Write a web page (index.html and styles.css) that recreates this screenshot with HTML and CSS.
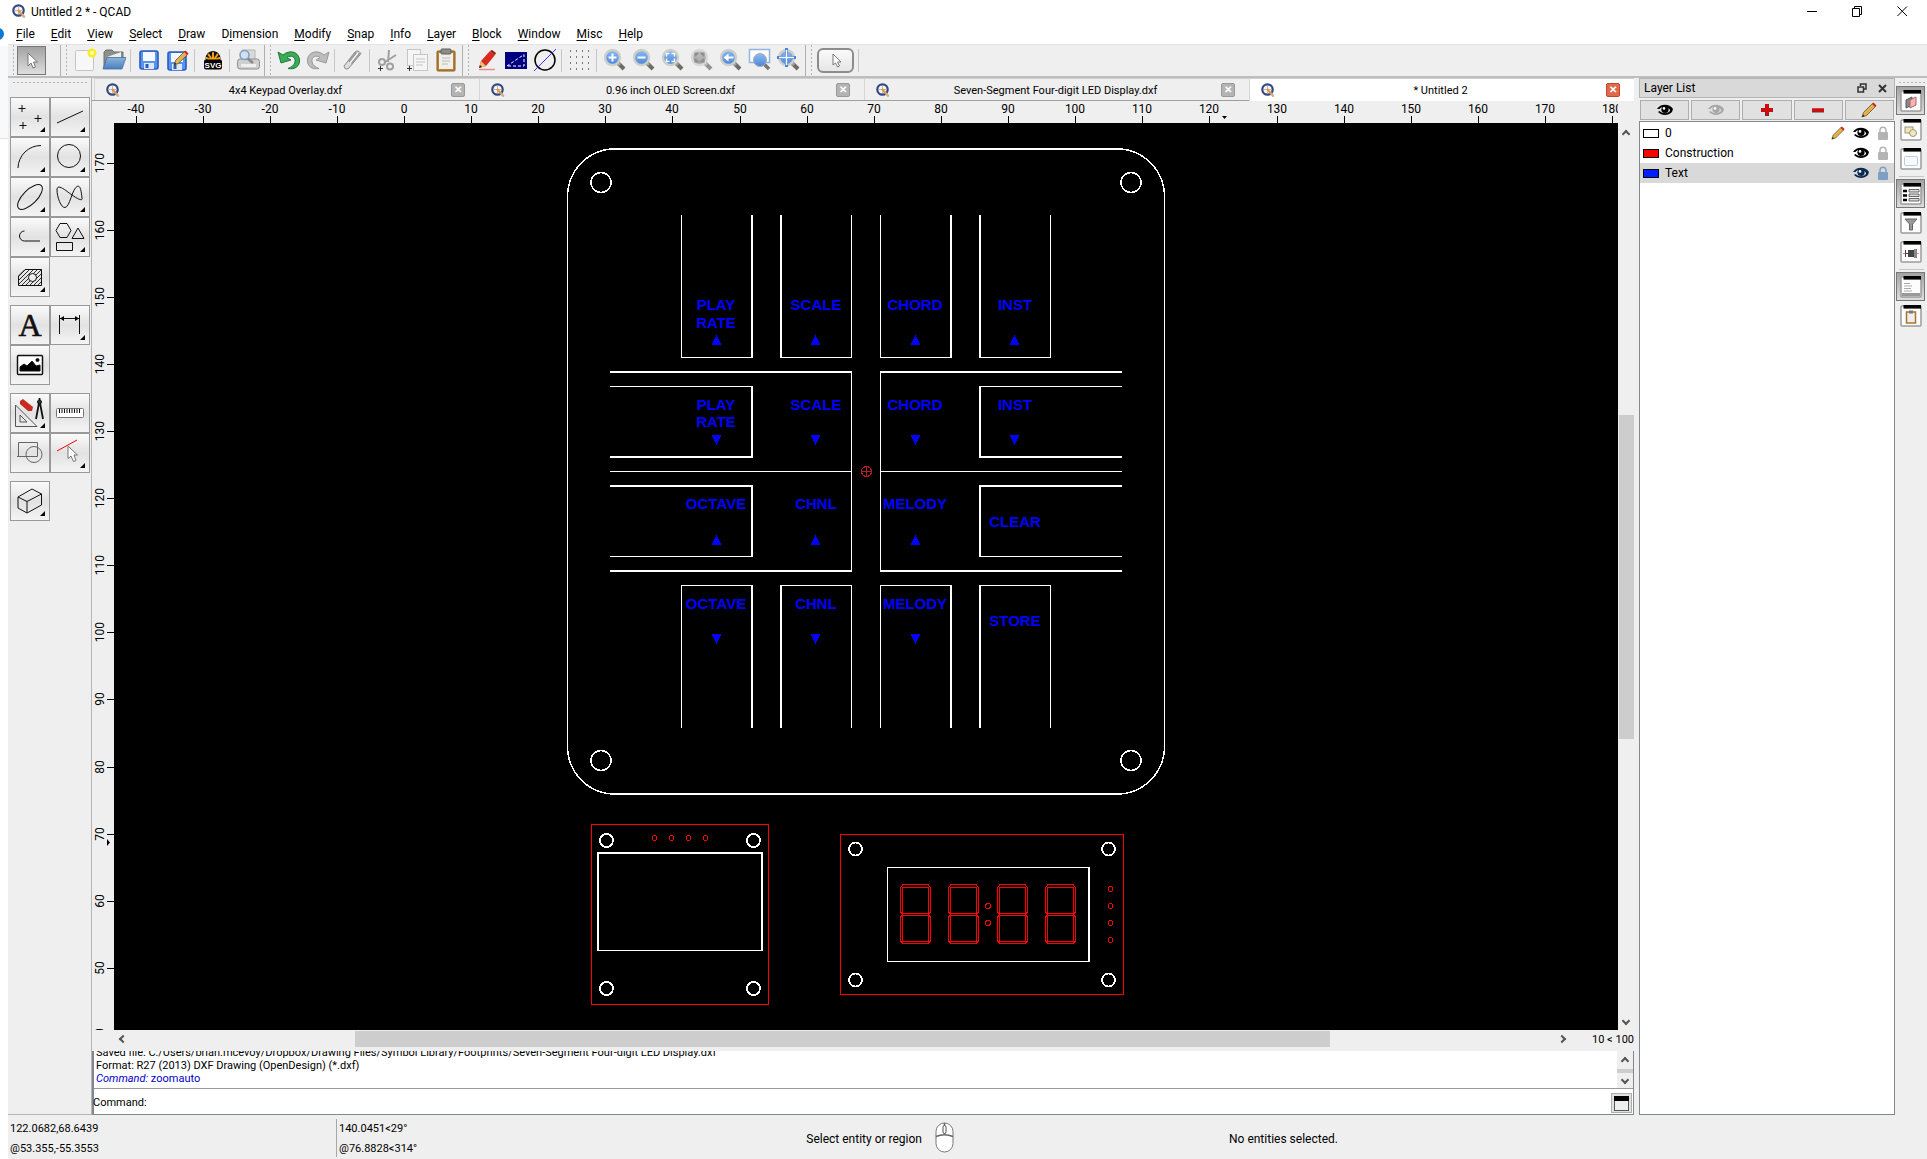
FILE: index.html
```html
<!DOCTYPE html>
<html lang="en">
<head>
    <meta charset="UTF-8">
    <meta name="viewport" content="width=device-width, initial-scale=1.0">
    <title>Untitled 2 * - QCAD</title>
    <link rel="stylesheet" href="styles.css">
</head>
<body>
<!-- shared icons -->
<svg class="defs" aria-hidden="true">
    <defs>
        <linearGradient id="lensBlue" x1="0" y1="0" x2="0" y2="1"><stop offset="0" stop-color="#8dbcf0"/><stop offset="1" stop-color="#4a86d8"/></linearGradient>
        <linearGradient id="folder" x1="0" y1="0" x2="0" y2="1"><stop offset="0" stop-color="#8cb4dc"/><stop offset="1" stop-color="#4a80bd"/></linearGradient>
        <pattern id="hatch" width="4" height="4" patternUnits="userSpaceOnUse"><path d="M-1 1L1-1M0 4L4 0M3 5L5 3" stroke="#000" stroke-width=".8"/></pattern>
        <symbol id="i-app" viewBox="0 0 14 14">
            <circle cx="6.5" cy="6.5" r="5.2" fill="#f4f4f8" stroke="#34477f" stroke-width="2.2"/>
            <path d="M6.5 2.5V10M3 6.5H10" stroke="#a9a9b4" stroke-width=".8"/>
            <path d="M6 6L12.5 13.2" stroke="#e39a3a" stroke-width="2.2"/>
            <path d="M10 10.5L13 13.5" stroke="#b9b9c4" stroke-width="1.4"/>
        </symbol>
        <symbol id="i-lens" viewBox="0 0 24 24">
            <path d="M14 14L21 21" stroke="#6d6d66" stroke-width="4"/>
            <path d="M13 13L17 17" stroke="#a5a59d" stroke-width="3"/>
            <circle cx="9.500" cy="9.500" r="7.500" fill="url(#lensBlue)" stroke="#cfcfca" stroke-width="2.4"/>
        </symbol>
        <symbol id="i-eye" viewBox="0 0 16 12">
            <path d="M0 5C3 0 12-1 16 5L15 8C11 12 5 12 1 8L2.500 7C6 10 10 10 13 7C14 4 5 1 2.500 5Z" fill="currentColor"/>
            <circle cx="8" cy="5.500" r="3.600" fill="currentColor"/>
            <circle cx="7" cy="4.400" r="1.300" fill="#fff"/>
        </symbol>
        <symbol id="i-lock" viewBox="0 0 12 14">
            <path d="M3 7V4.500C3 0 9 0 9 4.500V7" fill="none" stroke="currentColor" stroke-width="1.500"/>
            <rect x="1" y="6" width="10" height="8" rx="1" fill="currentColor"/>
        </symbol>
        <symbol id="i-pencil" viewBox="0 0 16 16">
            <path d="M1 15L2.500 10.500L11.500 1.500L14.500 4.500L5.500 13.500Z" fill="#e0b055" stroke="#6e4c1c" stroke-width=".8"/>
            <path d="M11 2L12.500 .5L15.500 3.500L14 5Z" fill="#d2231c"/>
            <path d="M1 15L2 12.500L3.500 14Z" fill="#222"/>
        </symbol>
        <symbol id="i-save" viewBox="0 0 20 20">
            <rect x="1" y="1" width="18" height="18" rx="2" fill="#5a93ee" stroke="#2a5cc0" stroke-width="1.600"/>
            <rect x="4" y="2" width="12" height="9" fill="#f4f8ff"/>
            <rect x="5" y="13" width="10" height="6" fill="#dfe8f6"/>
            <rect x="6.500" y="14" width="3" height="4" fill="#2a5cc0"/>
        </symbol>
        <symbol id="i-win" viewBox="0 0 22 22">
            <rect x="1" y="1" width="20" height="20" rx="1" fill="#fdfdfd" stroke="#9c9c9c" stroke-width="1.500"/>
            <rect x="3.500" y="0" width="17.500" height="3.600" fill="#000"/>
        </symbol>
        <symbol id="digit" viewBox="0 0 31 60">
            <path d="M3 .5H28L30.500 4V28L28.500 30.500L30.500 33V57L28 59.500H3L.5 57V33L2.500 30.500L.5 28V4Z"/>
            <path d="M2.500 3.500H28.500V29.500H2.500ZM2.500 31.500H28.500V57.500H2.500Z"/>
        </symbol>
    </defs>
</svg>

<div class="edge"><span class="edge-dot"></span></div>
<div class="app">
    <header class="titlebar">
        <svg width="14" height="14"><use href="#i-app"/></svg>
        <span class="title">Untitled 2 * - QCAD</span>
        <button class="winbtn" aria-label="Minimize"><svg width="11" height="11"><path d="M0 5.500H10" stroke="#000"/></svg></button>
        <button class="winbtn" aria-label="Restore"><svg width="11" height="11"><path d="M.5 2.500H7.500V10.500H.5ZM2.500 2.500V.5H9.500V8.500H7.500" fill="none" stroke="#000"/></svg></button>
        <button class="winbtn" aria-label="Close"><svg width="11" height="11"><path d="M.5.5L10 10M10 .5L.5 10" stroke="#000"/></svg></button>
    </header>
    <nav class="menubar">
        <button><u>F</u>ile</button>
        <button><u>E</u>dit</button>
        <button><u>V</u>iew</button>
        <button><u>S</u>elect</button>
        <button><u>D</u>raw</button>
        <button>D<u>i</u>mension</button>
        <button><u>M</u>odify</button>
        <button><u>S</u>nap</button>
        <button><u>I</u>nfo</button>
        <button><u>L</u>ayer</button>
        <button><u>B</u>lock</button>
        <button><u>W</u>indow</button>
        <button><u>M</u>isc</button>
        <button><u>H</u>elp</button>
    </nav>

    <div class="toolbar">
        <div class="group group-wide">
            <button class="tool on" aria-label="Reset"><svg width="24" height="24"><path d="M8 5V18L11 15L13 20L15.500 19L13.500 14H17.500Z" fill="#fff" stroke="#777"/></svg></button>
        </div>
        <div class="group">
            <button class="tool" aria-label="New"><svg width="24" height="24"><rect x="2.500" y="2.500" width="18" height="20" rx="1" fill="#f7f7f7" stroke="#c4c4c4"/><circle cx="19" cy="5" r="4.500" fill="#f5ee2a"/><circle cx="19" cy="5" r="2" fill="#fffcb0"/></svg></button>
            <button class="tool" aria-label="Open"><svg width="24" height="24"><path d="M2 20V4L4 2H10L12 4H21V12Z" fill="#8f8f8b" stroke="#6f6f6b"/><path d="M5 9L19 4V12Z" fill="#eee"/><path d="M1 21L5 9.500H24L20 21Z" fill="url(#folder)" stroke="#3d6ea8" stroke-width=".8"/></svg></button>
            <i class="sep"></i>
            <button class="tool" aria-label="Save"><svg width="20" height="20"><use href="#i-save"/></svg></button>
            <button class="tool" aria-label="Save As"><svg width="22" height="22"><use href="#i-save" y="2" width="20" height="20"/><use href="#i-pencil" x="6" y="0" width="16" height="18"/></svg></button>
            <i class="sep"></i>
            <button class="tool" aria-label="SVG Export"><svg width="20" height="20"><path d="M3 11C1 5 6 1 10 1S19 5 17 11Z" fill="#111"/><path d="M10 11V3M10 11L5.500 4.500M10 11L14.500 4.500M10 11L3.500 8M10 11L16.500 8" stroke="#f5a21b" stroke-width="2" stroke-linecap="round"/><rect x="1" y="9.500" width="18" height="10" rx="2" fill="#000"/><text x="10" y="18" class="svg-logo">SVG</text></svg></button>
            <i class="sep"></i>
            <button class="tool" aria-label="Print Preview"><svg width="24" height="24"><path d="M6 2H19V12H6Z" fill="#dadada" stroke="#b5b5b5"/><rect x="1.500" y="11" width="22" height="10" rx="2.500" fill="#cfcfcf" stroke="#8e8e8e"/><path d="M5 16H20V19H5Z" fill="#efefef"/><path d="M11 10L17 15" stroke="#888" stroke-width="2.500"/><circle cx="8.500" cy="7" r="4.500" fill="#cfe0f2" stroke="#7f9cbf" stroke-width="1.500"/></svg></button>
        </div>
        <div class="group">
            <button class="tool" aria-label="Undo"><svg width="24" height="24"><path d="M1 4L4 15L14 12L10 9.500C14 6.500 19 9 18 14C17.500 17 15 19 11 20.500C18 22 23 18 22.500 12C22 4 13 1 6 7Z" fill="#3bab55" stroke="#1f7a36"/></svg></button>
            <button class="tool" aria-label="Redo"><svg width="24" height="24"><path d="M23 4L20 15L10 12L14 9.500C10 6.500 5 9 6 14C6.500 17 9 19 13 20.500C6 22 1 18 1.500 12C2 4 11 1 18 7Z" fill="#bdbdbd" stroke="#999"/></svg></button>
            <i class="sep"></i>
            <button class="tool" aria-label="Delete"><svg width="24" height="24"><path d="M3 18L14 4Q16 2 18 3.500L20 5.500L8 20Q6 22 4 20.500Z" fill="#ddd" stroke="#8d8d8d"/><path d="M7 13L14 4L20 5.500L11 16Z" fill="#999"/><path d="M9 15L17 5" stroke="#f4f4f4" stroke-width="1.500"/></svg></button>
            <i class="sep"></i>
            <button class="tool" aria-label="Cut"><svg width="24" height="24" fill="none" stroke="#a0a0a0"><path d="M13 2L12 14M20 7L9 14" stroke-width="2"/><circle cx="6" cy="14" r="3" stroke-width="2"/><circle cx="14" cy="18.500" r="3" stroke-width="2"/><path d="M2 20.500H7M4.500 18V23" stroke="#333"/></svg></button>
            <button class="tool" aria-label="Copy"><svg width="24" height="24" fill="#f5f5f5" stroke="#c5c5c5"><rect x="2.500" y="1.500" width="13" height="16"/><rect x="8.500" y="6.500" width="14" height="16"/><path d="M11 11H20M11 14H20M11 17H18"/><path d="M2 20.500H7M4.500 18V23" stroke="#333"/></svg></button>
            <button class="tool" aria-label="Paste"><svg width="24" height="24"><rect x="3" y="3" width="18" height="20" rx="1" fill="#b98332" stroke="#8a5c1c"/><rect x="5" y="5" width="14" height="16" fill="#efefec"/><path d="M8 10H16M8 13H16M8 16H14" stroke="#bbb"/><rect x="7" y="1" width="10" height="5" rx="1" fill="#8e8e86" stroke="#5f5f58"/></svg></button>
        </div>
        <div class="group">
            <button class="tool" aria-label="Draft"><svg width="24" height="24"><path d="M4 20L6 13L15 3L20 7L11 18Z" fill="#d82c20"/><path d="M15 3L17 2L21 5L20 7Z" fill="#8c1a14"/><path d="M4 20L6 13L11 18Z" fill="#ecc27a"/><path d="M4 20L5 17L7 19Z" fill="#222"/><path d="M4 21.500H20" stroke="#e88" stroke-width="1.500"/></svg></button>
            <button class="tool" aria-label="Screen Mode"><svg width="24" height="24"><rect x="1" y="4" width="22" height="17" fill="#000080"/><path d="M3 18L20 6.500V18Z" fill="none" stroke="#fff" stroke-dasharray="3 2"/></svg></button>
            <button class="tool" aria-label="Ellipse preview"><svg width="24" height="24"><circle cx="12" cy="12" r="10" fill="none" stroke="#000" stroke-width="1.500"/><path d="M1 23L23 1" stroke="#33f"/></svg></button>
            <i class="sep"></i>
            <button class="tool" aria-label="Grid"><svg width="22" height="22"><path d="M1 2H21M1 8H21M1 14H21M1 20H21" stroke="#777" stroke-width="2" stroke-dasharray="1 5"/></svg></button>
            <i class="sep"></i>
            <button class="tool" aria-label="Zoom In"><svg width="24" height="24"><use href="#i-lens"/><path d="M9.500 5.500V13.500M5.500 9.500H13.500" stroke="#fff" stroke-width="2"/></svg></button>
            <button class="tool" aria-label="Zoom Out"><svg width="24" height="24"><use href="#i-lens"/><path d="M5.500 9.500H13.500" stroke="#fff" stroke-width="2"/></svg></button>
            <button class="tool" aria-label="Auto Zoom"><svg width="24" height="24"><use href="#i-lens"/><path d="M5.500 8.500V5.500H8.500M10.500 5.500H13.500V8.500M13.500 10.500V13.500H10.500M8.500 13.500H5.500V10.500" fill="none" stroke="#fff" stroke-width="1.500"/></svg></button>
            <button class="tool gray" aria-label="Zoom to Selection"><svg width="24" height="24"><use href="#i-lens"/><path d="M5.500 8.500V5.500H8.500M10.500 5.500H13.500V8.500M13.500 10.500V13.500H10.500M8.500 13.500H5.500V10.500" fill="#777" stroke="#666" stroke-width="2"/></svg></button>
            <button class="tool" aria-label="Previous View"><svg width="24" height="24"><use href="#i-lens"/><path d="M4.500 9.500L9.500 5.500V8.500H14.500V10.500H9.500V13.500Z" fill="#fff"/></svg></button>
            <button class="tool" aria-label="Window Zoom"><svg width="24" height="24"><rect x="1.500" y="1.500" width="20" height="13" fill="#fff" stroke="#8fb4e0" stroke-width="1.500"/><path d="M16 16L21 21" stroke="#77776f" stroke-width="3.500"/><circle cx="12" cy="12" r="6.500" fill="url(#lensBlue)" stroke="#aab"/></svg></button>
            <button class="tool" aria-label="Pan Zoom"><svg width="24" height="24"><use href="#i-lens"/><path d="M9.500 0V19M0 9.500H19" stroke="#4a86d8" stroke-width="3"/><path d="M9.500 2V17M2 9.500H17" stroke="#fff" stroke-width="1.500"/></svg></button>
        </div>
        <div class="group group-last">
            <button class="pill" aria-label="Selection"><svg width="12" height="16"><path d="M3 2V13L5.500 11L7.500 15L9.500 14L7.500 10H11Z" fill="#fff" stroke="#777"/></svg></button>
            <i class="sep"></i>
        </div>
    </div>

    <div class="main">
        <aside class="sidetools">
            <i class="grip"></i>
            <div class="cells">
                <button class="cell more" aria-label="Point"><svg><path d="M8.500 11.500H15.500M12 8V15M24.500 21.500H31.500M28 18V25M9.500 28.500H16.500M13 25V32"/></svg></button>
                <button class="cell more" aria-label="Line"><svg><path d="M7 26L33 14"/></svg></button>
                <button class="cell more" aria-label="Arc"><svg><path d="M8 31A23 23 0 0 1 31 8.500"/></svg></button>
                <button class="cell more" aria-label="Circle"><svg><circle cx="19" cy="19" r="11.500"/></svg></button>
                <button class="cell more" aria-label="Ellipse"><svg><ellipse cx="20" cy="20" rx="16" ry="7" transform="rotate(-45 20 20)"/></svg></button>
                <button class="cell more" aria-label="Spline"><svg><path d="M7 13C7 6 15 13 22 18S33 24 32 21C31 12 30 8 27 9.500C22 12 20 30 15 30.500C11 31 7 20 7 13Z"/></svg></button>
                <button class="cell more" aria-label="Polyline"><svg><path d="M14.500 14A5 5 0 0 0 14.500 24H30"/></svg></button>
                <button class="cell more" aria-label="Shape"><svg><path d="M6 13.500L10 6.500H17L21 13.500L17 20.500H10ZM28 11L34 21.500H22ZM6.500 25.500H22.500V33.500H6.500Z"/></svg></button>
                <button class="cell more" aria-label="Hatch"><svg><path d="M8.500 19L15 12.500H31.500V28.500H8.500Z" fill="url(#hatch)"/><circle cx="22.500" cy="20.500" r="4" fill="#eee"/></svg></button>
            </div>
            <div class="cells">
                <button class="cell" aria-label="Text"><svg><text x="20" y="31" class="big-a">A</text></svg></button>
                <button class="cell more" aria-label="Dimension"><svg><path d="M9.500 10V29M29.500 10V29M9.500 13.500H29.500"/><path d="M10 13.500L14 11V16ZM29 13.500L25 11V16Z" fill="#000" stroke="none"/></svg></button>
                <button class="cell" aria-label="Image"><svg><rect x="7.500" y="10.500" width="25" height="19" rx="1" fill="#fff" stroke-width="1.500"/><path d="M10 26V22L14 19L17 21L22 16L26 21L30 20V26Z" fill="#000"/><circle cx="27.500" cy="15" r="1.500" fill="#000"/></svg></button>
            </div>
            <div class="cells">
                <button class="cell more" aria-label="Drawing Tools"><svg><path d="M5.500 12V33.500H27ZM10 22V29H17Z" stroke="#555"/><path d="M10 8L13 6L23 14L22 18L18 18L10 11Z" fill="#c92a20" stroke="none"/><path d="M29.500 5V9M29 10L26 26M30 10L33 26" stroke-width="1.800"/><circle cx="29.500" cy="9" r="2" fill="#333"/></svg></button>
                <button class="cell" aria-label="Measure"><svg><rect x="6.500" y="15.500" width="27" height="9" rx="1" fill="#fff" stroke="#777"/><path d="M9 18H31" stroke-width="4" stroke-dasharray="1 1.500"/></svg></button>
                <button class="cell" aria-label="Modify"><svg><path d="M8.500 24V9.500H27.500V23.500H7" stroke="#666"/><circle cx="24" cy="21.500" r="8" stroke="#666"/></svg></button>
                <button class="cell more" aria-label="Select"><svg><path d="M7 18L27 7" stroke="#f00"/><path d="M18 13V25.500L21 23L23.500 28.500L26 27.500L24 22H27.500Z" fill="#fff" stroke="#777"/></svg></button>
            </div>
            <div class="cells">
                <button class="cell more" aria-label="Solid"><svg><path d="M8 16L22 8L31.500 13V24L17 32L8 27ZM8 16L17 20.500L31.500 13M17 20.500V32"/></svg></button>
            </div>
        </aside>

        <main class="view">
            <div class="tabs">
                <button class="tab"><svg width="14" height="14"><use href="#i-app"/></svg><span>4x4 Keypad Overlay.dxf</span><b>&#10005;</b></button>
                <button class="tab"><svg width="14" height="14"><use href="#i-app"/></svg><span>0.96 inch OLED Screen.dxf</span><b>&#10005;</b></button>
                <button class="tab"><svg width="14" height="14"><use href="#i-app"/></svg><span>Seven-Segment Four-digit LED Display.dxf</span><b>&#10005;</b></button>
                <button class="tab active"><svg width="14" height="14"><use href="#i-app"/></svg><span>* Untitled 2</span><b>&#10005;</b></button>
            </div>

            <div class="drawing">
                <svg class="ruler-h" id="rulerH"><path d="M1130 15H1135L1132.500 18Z"/></svg>
                <svg class="ruler-v" id="rulerV"><path d="M15 716L18 719.500L15 723Z"/></svg>
                <svg class="canvas" shape-rendering="crispEdges">
                    <g transform="translate(-114 -123)" fill="none" stroke="#fff">
                        <!-- panel outline -->
                        <g stroke-width="2">
                            <path d="M614 149H1118M614 794H1118"/>
                            <path stroke-width="1.500" d="M567.500 197A47 48 0 0 1 614 149M1118 149A47 48 0 0 1 1164.500 197M1164.500 746A47 48 0 0 1 1118 794M614 794A47 48 0 0 1 567.500 746"/>
                            <path stroke-width="1" d="M567.500 197V746M1164.500 197V746"/>
                        </g>
                        <g stroke-width="1.500">
                            <circle cx="601" cy="182.500" r="10"/><circle cx="1131" cy="182.500" r="10"/>
                            <circle cx="601" cy="760.500" r="10"/><circle cx="1131" cy="760.500" r="10"/>
                        </g>
                        <!-- keypad slots -->
                        <g>
                            <path d="M681.500 215V357.500H752M780 357.500H851.500V215M880.500 215V357.500H951M979 357.500H1050.500V215"/>
                            <path d="M681.500 728V585.500H752M780 585.500H851.500V728M880.500 728V585.500H951M979 585.500H1050.500V728"/>
                            <path d="M610 386.500H752M980 386.500H1122M610 556.500H752M980 556.500H1122M610 471.500H851M881 471.500H1122M851.500 372V571M880.500 372V571"/>
                            <path stroke-width="2" d="M752 215V358M781 215V358M951 215V358M980 215V358M752 585V728M781 585V728M951 585V728M980 585V728"/>
                            <path stroke-width="2" d="M610 372H852M880 372H1122M610 571H852M880 571H1122M610 457H753M979 457H1122M610 486H753M979 486H1122M752 386V457M980 386V457M752 486V557M980 486V557"/>
                        </g>
                        <g stroke="#b02020"><circle cx="866.500" cy="471.500" r="5"/><path d="M861 471.500H872M866.500 466V477"/></g>
                        <g class="keys">
                            <text x="716" y="310">PLAY</text><text x="716" y="328">RATE</text>
                            <text x="816" y="310">SCALE</text><text x="915" y="310">CHORD</text><text x="1015" y="310">INST</text>
                            <text x="716" y="410">PLAY</text><text x="716" y="427">RATE</text>
                            <text x="816" y="410">SCALE</text><text x="915" y="410">CHORD</text><text x="1015" y="410">INST</text>
                            <text x="716" y="509">OCTAVE</text><text x="816" y="509">CHNL</text><text x="915" y="509">MELODY</text><text x="1015" y="527">CLEAR</text>
                            <text x="716" y="609">OCTAVE</text><text x="816" y="609">CHNL</text><text x="915" y="609">MELODY</text><text x="1015" y="626">STORE</text>
                            <path d="M716.500 335L721.500 345H711.500ZM815.500 335L820.500 345H810.500ZM915.500 335L920.500 345H910.500ZM1014.500 335L1019.500 345H1009.500Z"/>
                            <path d="M716.500 445L721.500 435H711.500ZM815.500 445L820.500 435H810.500ZM915.500 445L920.500 435H910.500ZM1014.500 445L1019.500 435H1009.500Z"/>
                            <path d="M716.500 535L721.500 545H711.500ZM815.500 535L820.500 545H810.500ZM915.500 535L920.500 545H910.500Z"/>
                            <path d="M716.500 644L721.500 634H711.500ZM815.500 644L820.500 634H810.500ZM915.500 644L920.500 634H910.500Z"/>
                        </g>
                        <!-- OLED screen -->
                        <g stroke="#f00">
                            <rect x="591.500" y="824.500" width="177" height="180"/>
                            <circle cx="654.500" cy="838" r="2.500"/><circle cx="671.500" cy="838" r="2.500"/><circle cx="688.500" cy="838" r="2.500"/><circle cx="705.500" cy="838" r="2.500"/>
                        </g>
                        <g>
                            <path stroke-width="2" d="M598 950V853H762V950"/><path d="M597 950.500H763"/>
                            <path d="M887.500 867.500H1089M887.500 867V962M887 961.500H1090"/><path stroke-width="2" d="M1089 867V962"/>
                        </g>
                        <g stroke-width="1.800">
                            <circle cx="606.500" cy="840.500" r="6.500"/><circle cx="753.500" cy="840.500" r="6.500"/>
                            <circle cx="606.500" cy="988.500" r="6.500"/><circle cx="753.500" cy="988.500" r="6.500"/>
                            <circle cx="855.500" cy="849" r="6.500"/><circle cx="1108.500" cy="849" r="6.500"/>
                            <circle cx="855.500" cy="980" r="6.500"/><circle cx="1108.500" cy="980" r="6.500"/>
                        </g>
                        <!-- seven segment display -->
                        <g stroke="#f00">
                            <rect x="840.500" y="834.500" width="283" height="160"/>
                            <use href="#digit" x="900" y="884" width="31" height="60"/>
                            <use href="#digit" x="948" y="884" width="31" height="60"/>
                            <use href="#digit" x="997" y="884" width="31" height="60"/>
                            <use href="#digit" x="1045" y="884" width="31" height="60"/>
                            <circle cx="988" cy="906" r="2.500"/><circle cx="988" cy="923" r="2.500"/>
                            <circle cx="1110.500" cy="889" r="2.500"/><circle cx="1110.500" cy="906" r="2.500"/><circle cx="1110.500" cy="923" r="2.500"/><circle cx="1110.500" cy="940" r="2.500"/>
                        </g>
                    </g>
                </svg>
                <div class="vscroll"><i class="arrow up"></i><div class="track"><span class="thumb"></span></div><i class="arrow down"></i></div>
                <div class="hscroll"><i class="arrow left"></i><div class="track"><span class="thumb"></span></div><i class="arrow right"></i></div>
                <div class="gridinfo">10 &lt; 100</div>
            </div>

            <section class="console">
                <div class="history">
                    <div class="log">
                        <p>Saved file: C:/Users/brian.mcevoy/Dropbox/Drawing Files/Symbol Library/Footprints/Seven-Segment Four-digit LED Display.dxf</p>
                        <p>Format: R27 (2013) DXF Drawing (OpenDesign) (*.dxf)</p>
                        <p class="cmd"><em>Command:</em> zoomauto</p>
                    </div>
                    <div class="logscroll"><i class="arrow up"></i><span></span><i class="arrow down"></i></div>
                </div>
                <div class="prompt">
                    <label for="command">Command:</label>
                    <input id="command" type="text">
                    <button aria-label="Toggle console"><svg width="15" height="15"><rect x=".5" y=".5" width="14" height="14" fill="#eee" stroke="#555"/><rect width="15" height="5"/></svg></button>
                </div>
            </section>
        </main>

        <aside class="layers">
            <h2>Layer List <svg width="10" height="10"><path d="M3.500 3V1H9V6H7M1 4H6.500V9H1Z" fill="none" stroke="#333" stroke-width="1.500"/></svg><svg width="9" height="9"><path d="M1 1L8 8M8 1L1 8" stroke="#333" stroke-width="2"/></svg></h2>
            <div class="layer-actions">
                <button aria-label="Show all"><svg width="16" height="12"><use href="#i-eye"/></svg></button>
                <button aria-label="Hide all" class="dim"><svg width="16" height="12"><use href="#i-eye"/></svg></button>
                <button aria-label="Add layer"><svg width="14" height="14"><path d="M7 1V13M1 7H13" stroke="#444" stroke-width="4"/><path d="M7 1V12M1 7H13" stroke="#e80000" stroke-width="3"/></svg></button>
                <button aria-label="Remove layer"><svg width="14" height="14"><path d="M1 7.500H13" stroke="#444" stroke-width="4"/><path d="M1 7H13" stroke="#e80000" stroke-width="3"/></svg></button>
                <button aria-label="Edit layer"><svg width="16" height="16"><use href="#i-pencil"/></svg></button>
            </div>
            <ul class="layer-list">
                <li><i class="swatch"></i><span>0</span><svg width="14" height="14"><use href="#i-pencil"/></svg><svg width="16" height="12"><use href="#i-eye"/></svg><svg class="lock" width="12" height="14"><use href="#i-lock"/></svg></li>
                <li><i class="swatch red"></i><span>Construction</span><svg width="16" height="12"><use href="#i-eye"/></svg><svg class="lock" width="12" height="14"><use href="#i-lock"/></svg></li>
                <li class="selected"><i class="swatch blue"></i><span>Text</span><svg width="16" height="12"><use href="#i-eye"/></svg><svg class="lock" width="12" height="14"><use href="#i-lock"/></svg></li>
            </ul>
        </aside>

        <aside class="docks">
            <i class="grip"></i>
            <button class="tool on" aria-label="Layers"><svg width="22" height="22"><use href="#i-win"/><path d="M6 10L12 7V15L6 18Z" fill="#888" stroke="#555"/><path d="M10 10L16 7V15L10 18Z" fill="#f6b4b4" stroke="#a66"/></svg></button>
            <button class="tool" aria-label="Blocks"><svg width="22" height="22"><use href="#i-win"/><rect x="5" y="8" width="8" height="6" fill="#f3e7b8" stroke="#998"/><circle cx="13" cy="14" r="3.500" fill="#f3e7b8" stroke="#998"/></svg></button>
            <button class="tool" aria-label="Views"><svg width="22" height="22"><use href="#i-win"/><rect x="4.500" y="8.500" width="13" height="9" rx="1" fill="#f7fbff" stroke="#bcd"/></svg></button>
            <i class="hsep"></i>
            <button class="tool on" aria-label="Property Editor"><svg width="22" height="22"><use href="#i-win"/><path d="M3 8H7M3 12.500H7M3 17H7" stroke="#000" stroke-width="2.500"/><path d="M9 6.500H19V9H9ZM9 11H19V13.500H9ZM9 15.500H19V18H9Z" fill="#ddd" stroke="#444" stroke-width=".8"/></svg></button>
            <button class="tool" aria-label="Selection Filter"><svg width="22" height="22"><use href="#i-win"/><path d="M5 7H17L12.500 12V18H9.500V12Z" fill="#999" stroke="#666"/></svg></button>
            <button class="tool" aria-label="Library Browser"><svg width="22" height="22"><use href="#i-win"/><path d="M3 12.500H19" stroke="#e88"/><path d="M5.500 9V16M5.500 12.500H8" fill="none" stroke="#444"/><rect x="8" y="9" width="6" height="7" fill="#444"/><rect x="14" y="8" width="3" height="9" fill="#888"/></svg></button>
            <i class="hsep"></i>
            <button class="tool on" aria-label="Command Line"><svg width="22" height="22"><use href="#i-win"/><path d="M4 7.500H10M4 10H12M4 12.500H11M4 15H12" stroke="#aaa"/><path d="M2 18.500H20" stroke="#999" stroke-width="3"/></svg></button>
            <button class="tool" aria-label="Clipboard"><svg width="22" height="22"><use href="#i-win"/><rect x="6.500" y="7" width="9" height="11" fill="#eee" stroke="#a8742c" stroke-width="1.500"/><rect x="9" y="5.500" width="4" height="3" fill="#777"/></svg></button>
        </aside>
    </div>

    <footer class="status">
        <div class="coords"><span>122.0682,68.6439</span><span>@53.355,-55.3553</span></div>
        <div class="coords polar"><span>140.0451&lt;29°</span><span>@76.8828&lt;314°</span></div>
        <div class="hint">Select entity or region</div>
        <svg class="mouse" width="20" height="32"><rect x="1" y="1" width="17" height="29" rx="8.500" fill="#fff" stroke="#777"/><path d="M1 14.500Q9.500 11 18 14.500M9.500 1V4M9.500 11V13" fill="none" stroke="#666" stroke-width="1.500"/><rect x="8" y="3.500" width="3" height="8" rx="1.500" fill="#fff" stroke="#555"/></svg>
        <div class="selinfo">No entities selected.</div>
    </footer>
</div>

<script>
    // one ruler label every 10 units
    const NS = "http://www.w3.org/2000/svg";
    const STEP = 67.12;

    function add(parent, tag, attrs, text) {
        const el = document.createElementNS(NS, tag);
        for (const key in attrs) el.setAttribute(key, attrs[key]);
        if (text !== undefined) el.textContent = text;
        parent.appendChild(el);
    }

    function drawRulers() {
        const h = document.getElementById("rulerH");
        const v = document.getElementById("rulerV");
        for (let i = -4; i <= 18; i++) {
            const x = Math.round(312 + i * STEP);
            add(h, "text", { x: x, y: 12 }, i * 10);
            add(h, "line", { x1: x + 0.5, x2: x + 0.5, y1: 15, y2: 22 });
        }
        for (let i = 17; i >= 4; i--) {
            const y = Math.round(39.5 + (17 - i) * STEP);
            add(v, "text", { x: 12, y: y, transform: `rotate(-90 12 ${y})` }, i * 10);
            add(v, "line", { x1: 15, x2: 22, y1: y + 0.5, y2: y + 0.5 });
        }
    }

    drawRulers();
</script>
</body>
</html>
```
FILE: styles.css
```css
* {
    box-sizing: border-box;
}
body {
    margin: 0;
    height: 100vh;
    display: flex;
    overflow: hidden;
    background: #fff;
    color: #000;
    font-family: Roboto, "Open Sans", sans-serif;
    font-size: 12px;
    line-height: 16px;
}
button {
    margin: 0;
    padding: 0;
    border: 0;
    background: none;
    color: inherit;
    font: inherit;
}
svg {
    display: block;
    flex: none;
}
.defs {
    position: absolute;
    width: 0;
    height: 0;
}

/* strip of the window behind */
.edge {
    flex: none;
    width: 8px;
    padding-top: 28px;
    overflow: hidden;
    background: linear-gradient(#fff 46px, #f8f9fa 46px, #f8f9fa 138px, #e0e2e6 138px, #e0e2e6 139px, #fff 139px);
}
.edge-dot {
    display: block;
    width: 12px;
    height: 12px;
    margin-left: -8px;
    border-radius: 50%;
    background: #0a78d4;
}
.app {
    flex: 1;
    min-width: 0;
    display: flex;
    flex-direction: column;
}

.titlebar {
    display: flex;
    align-items: center;
    height: 22px;
    padding: 0 2px 0 4px;
}
.title {
    flex: 1;
    padding: 2px 0 0 5px;
}
.winbtn {
    width: 45px;
    height: 20px;
    display: grid;
    place-items: center;
}
.menubar {
    display: flex;
    height: 22px;
    padding: 2px 0 0 8px;
    gap: 16px;
    align-items: center;
}
.menubar u {
    text-underline-offset: 2px;
}

/* top toolbar */
.toolbar {
    display: flex;
    height: 34px;
    background: #efefef;
    border-top: 1px solid #e4e4e4;
    border-bottom: 2px solid #bdbdbd;
}
.group {
    display: flex;
    align-items: center;
    padding: 0 2px 1px 9px;
    border-right: 1px solid #b0b0b0;
    background: radial-gradient(circle, #b4b4b4 1px, transparent 1px) 4px 3px / 3px 4px repeat-y;
}
.group-wide {
    padding-right: 14px;
}
.group-last {
    border: 0;
}
.tool {
    flex: none;
    width: 29px;
    height: 29px;
    display: grid;
    place-items: center;
}
.tool.on {
    border: 1px solid #777;
    background: linear-gradient(#a2a2a2, #dedede);
}
.tool.gray svg {
    filter: grayscale(1);
    opacity: 0.7;
}
.sep {
    flex: none;
    width: 6px;
    height: 23px;
    background: linear-gradient(#c6c6c6, #c6c6c6) 2px 0 / 1px 100% no-repeat;
}
.pill {
    width: 37px;
    height: 25px;
    margin: 0 2px;
    display: grid;
    place-items: center;
    border: 2px solid #8c8c8c;
    border-radius: 6px;
    background: linear-gradient(#fafafa, #e6e6e6);
}
.svg-logo {
    fill: #fff;
    font: bold 8px "Liberation Sans", sans-serif;
    text-anchor: middle;
}

.main {
    flex: 1;
    min-height: 0;
    display: flex;
    background: #efefef;
}

/* left tools */
.sidetools {
    flex: none;
    width: 84px;
    padding: 3px 2px 0;
    border-right: 1px solid #b4b4b4;
    border-bottom: 1px solid #b4b4b4;
}
.grip {
    display: block;
    height: 3px;
    margin: 0 2px;
    background: radial-gradient(circle, #b4b4b4 1px, transparent 1px) 0 0 / 4px 3px repeat-x;
}
.sidetools .grip {
    margin-bottom: 13px;
}
.cells {
    display: grid;
    grid-template-columns: 40px 40px;
    grid-auto-rows: 40px;
    margin-bottom: 8px;
}
.cell {
    border: 1px solid #999;
    background: linear-gradient(#fafafa, #e2e2e2 50%, #f4f4f4);
    position: relative;
}
.cell svg {
    width: 40px;
    height: 40px;
    margin: -1px;
    fill: none;
    stroke: #111;
}
.cell.more::after {
    content: "";
    position: absolute;
    right: 4px;
    bottom: 4px;
    border-left: 5px solid transparent;
    border-bottom: 5px solid #000;
}
.big-a {
    fill: #111;
    stroke-width: 0.6px;
    font: 32px "Liberation Serif", serif;
    text-anchor: middle;
}

/* tabs */
.view {
    flex: 1;
    min-width: 0;
    display: flex;
    flex-direction: column;
}
.tabs {
    display: flex;
    height: 23px;
    padding-left: 2px;
    border-bottom: 1px solid #a0a0a0;
    font-size: 11px;
}
.tab {
    flex: 1 1 0;
    display: flex;
    align-items: center;
    padding: 0 14px 0 11px;
    border-top: 1px solid #d0d0d0;
    border-left: 1px solid #d6d6d6;
}
.tab span {
    flex: 1;
    padding-top: 2px;
}
.tab b {
    width: 14px;
    height: 14px;
    border-radius: 2px;
    background: #b4b4b4;
    border: 1px solid #999;
    color: #fff;
    font-size: 10px;
    line-height: 12px;
}
.tab.active {
    background: #fff;
    margin-bottom: -1px;
}
.tab.active b {
    background: #e06a4c;
    border-color: #c4472c;
}

/* drawing area */
.drawing {
    flex: 1;
    min-height: 0;
    display: grid;
    grid-template-columns: 22px 1fr 16px;
    grid-template-rows: 22px 1fr 21px;
}
.ruler-h {
    grid-column: 1 / 3;
    width: 100%;
    height: 22px;
}
.ruler-v {
    grid-area: 2 / 1;
    width: 22px;
    height: 100%;
}
.ruler-h text,
.ruler-v text {
    text-anchor: middle;
}
.ruler-h line,
.ruler-v line {
    stroke: #000;
}
.canvas {
    grid-area: 2 / 2;
    width: 100%;
    height: 100%;
    background: #000;
}
.keys {
    fill: #00f;
    stroke: none;
    font: bold 15px "Liberation Sans", sans-serif;
    text-anchor: middle;
}
.vscroll {
    grid-area: 2 / 3;
    display: flex;
    flex-direction: column;
    align-items: center;
    padding: 8px 0 6px;
}
.track {
    flex: 1;
    display: flex;
}
.vscroll .track {
    width: 100%;
    flex-direction: column;
}
.vscroll .track::before {
    content: "";
    flex: 277;
}
.vscroll .track::after {
    content: "";
    flex: 278;
}
.vscroll .thumb {
    flex: 322;
    margin-left: 1px;
    background: #cdcdcd;
}
.hscroll {
    grid-area: 3 / 1 / 4 / 3;
    display: flex;
    height: 17px;
    align-items: center;
    padding: 1px 53px 0 28px;
}
.hscroll .track {
    height: 100%;
}
.hscroll .track::before {
    content: "";
    flex: 229;
}
.hscroll .track::after {
    content: "";
    flex: 229;
}
.hscroll .thumb {
    flex: 974;
    background: #cdcdcd;
}
.arrow {
    flex: none;
    width: 6px;
    height: 6px;
    border: solid #555;
    border-width: 2px 0 0 2px;
    transform: rotate(45deg);
}
.arrow.down {
    transform: rotate(225deg);
}
.arrow.left {
    transform: rotate(-45deg);
}
.arrow.right {
    transform: rotate(135deg);
}
.gridinfo {
    grid-area: 3 / 2 / 4 / 4;
    justify-self: end;
    padding-top: 2px;
    font-size: 11px;
    white-space: nowrap;
}

/* command line */
.console {
    flex: none;
    border: 1px solid #828790;
    border-top: 0;
    border-left-width: 2px;
    background: #fff;
    font-size: 11px;
}
.history {
    display: flex;
    height: 38px;
    border-bottom: 1px solid #999;
}
.log {
    flex: 1;
    display: flex;
    flex-direction: column;
    justify-content: flex-end;
    overflow: hidden;
    padding: 0 0 3px 2px;
}
.log p {
    flex: none;
    margin: 0;
    line-height: 13px;
    white-space: nowrap;
}
.cmd {
    color: #0000c8;
}
.logscroll {
    width: 16px;
    display: flex;
    flex-direction: column;
    align-items: center;
    justify-content: space-between;
    padding: 7px 0 5px;
    background: #efefef;
}
.logscroll span {
    width: 16px;
    height: 4px;
    background: #cdcdcd;
}
.prompt {
    display: flex;
    align-items: center;
    height: 25px;
    padding-top: 3px;
}
.prompt label {
    margin-left: -1px;
}
.prompt input {
    flex: 1;
    height: 16px;
    border: 0;
    outline: 0;
    font: inherit;
}
.prompt button {
    width: 21px;
    height: 20px;
    margin-right: 1px;
    display: grid;
    place-items: center;
    border: 1px solid #adadad;
    background: #e1e1e1;
}

/* layer list */
.layers {
    flex: none;
    width: 261px;
    padding-left: 5px;
    display: flex;
    flex-direction: column;
}
.layers h2 {
    display: flex;
    align-items: center;
    gap: 11px;
    height: 20px;
    margin: 0 0 2px;
    padding: 0 7px 0 4px;
    border: 1px solid #b4b4b4;
    background: #d9d9d9;
    font-size: 12px;
    font-weight: normal;
}
.layers h2 svg:first-of-type {
    margin-left: auto;
}
.layer-actions {
    display: flex;
    gap: 2px;
    padding: 0 1px;
}
.layer-actions button {
    flex: 1;
    height: 20px;
    display: grid;
    place-items: center;
    border: 1px solid #adadad;
    background: #e1e1e1;
}
.layer-actions .dim {
    color: #a8a8a8;
}
.layer-list {
    flex: 1;
    margin: 1px 0 0;
    padding: 1px 0 0;
    list-style: none;
    border: 1px solid #828790;
    background: #fff;
}
.layer-list li {
    display: flex;
    align-items: center;
    gap: 8px;
    height: 20px;
    padding: 0 5px 0 3px;
}
.layer-list li.selected {
    background: #d9d9d9;
}
.layer-list span {
    flex: 1;
    margin-left: -2px;
}
.swatch {
    width: 16px;
    height: 9px;
    border: 1px solid #000;
    background: #fff;
}
.swatch.red {
    background: #f00;
}
.swatch.blue {
    background: #0020ff;
}
.lock {
    color: #b4b4b4;
}
.selected svg {
    color: #0a2a50;
}
.selected .lock {
    color: #7d9fc4;
}
.docks {
    flex: none;
    width: 32px;
    padding: 3px 0 0 1px;
}
.docks .grip {
    margin: 0 2px 2px;
}
.hsep {
    display: block;
    height: 1px;
    margin: 3px 3px 2px;
    background: #c6c6c6;
}

/* status bar */
.status {
    flex: none;
    display: flex;
    align-items: center;
    height: 44px;
    padding-top: 2px;
    background: #efefef;
}
.coords {
    flex: none;
    width: 328px;
    display: flex;
    flex-direction: column;
    gap: 4px;
    padding: 2px 0 0 2px;
    font-size: 11px;
}
.polar {
    width: 330px;
    border-left: 1px solid #a8a8a8;
}
.hint {
    flex: none;
    width: 256px;
    padding-top: 2px;
    text-align: right;
}
.mouse {
    margin-left: 13px;
}
.selinfo {
    flex: 1;
    padding: 2px 0 0 274px;
}
```
